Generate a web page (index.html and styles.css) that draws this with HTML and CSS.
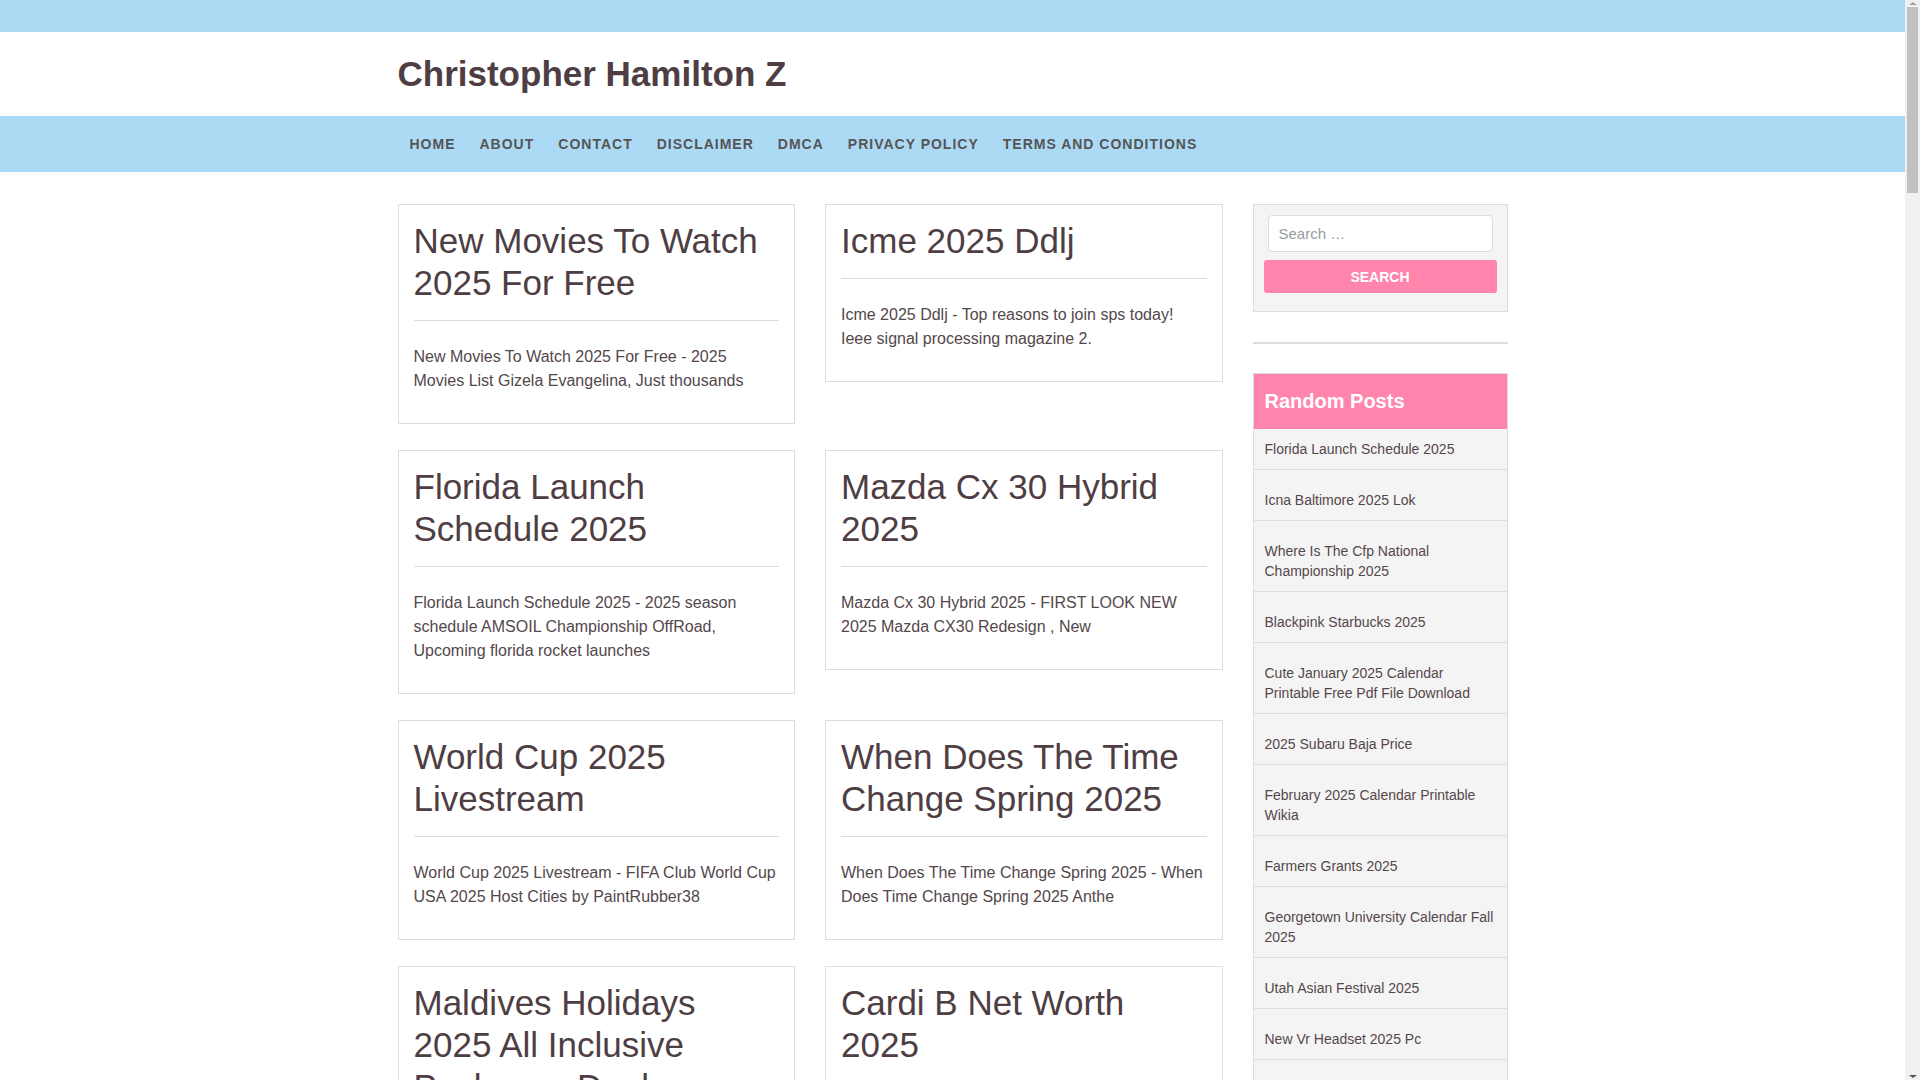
FILE: index.html
```html
<!DOCTYPE html>
<html lang="en">
  <head>
    <meta charset="UTF-8" />
    <meta name="viewport" content="width=device-width, initial-scale=1.0"/>
    <title>Christopher Hamilton Z</title>
    <link rel="stylesheet" href="styles.css">
  </head>

  <body>
    <div class="page">
      <div class="topbar"></div>

      <header class="site-header">
        <div class="container">
          <a class="site-title" href="#">Christopher Hamilton Z</a>
        </div>
      </header>

      <nav class="main-nav">
        <div class="container">
          <ul class="menu">
            <li><a href="#">Home</a></li>
            <li><a href="#">About</a></li>
            <li><a href="#">Contact</a></li>
            <li><a href="#">Disclaimer</a></li>
            <li><a href="#">DMCA</a></li>
            <li><a href="#">Privacy Policy</a></li>
            <li><a href="#">Terms and Conditions</a></li>
          </ul>
        </div>
      </nav>

      <div class="container content">
        <main class="posts">
          <article class="post">
            <h2 class="post-title"><a href="#">New Movies To Watch 2025 For Free</a></h2>
            <hr>
            <p>New Movies To Watch 2025 For Free - 2025 Movies List Gizela Evangelina, Just thousands</p>
          </article>
          <article class="post">
            <h2 class="post-title"><a href="#">Icme 2025 Ddlj</a></h2>
            <hr>
            <p>Icme 2025 Ddlj - Top reasons to join sps today! Ieee signal processing magazine 2.</p>
          </article>
          <article class="post">
            <h2 class="post-title"><a href="#">Florida Launch Schedule 2025</a></h2>
            <hr>
            <p>Florida Launch Schedule 2025 - 2025 season schedule AMSOIL Championship OffRoad, Upcoming florida rocket launches</p>
          </article>
          <article class="post">
            <h2 class="post-title"><a href="#">Mazda Cx 30 Hybrid 2025</a></h2>
            <hr>
            <p>Mazda Cx 30 Hybrid 2025 - FIRST LOOK NEW 2025 Mazda CX30 Redesign , New</p>
          </article>
          <article class="post">
            <h2 class="post-title"><a href="#">World Cup 2025 Livestream</a></h2>
            <hr>
            <p>World Cup 2025 Livestream - FIFA Club World Cup USA 2025 Host Cities by PaintRubber38</p>
          </article>
          <article class="post">
            <h2 class="post-title"><a href="#">When Does The Time Change Spring 2025</a></h2>
            <hr>
            <p>When Does The Time Change Spring 2025 - When Does Time Change Spring 2025 Anthe</p>
          </article>
          <article class="post">
            <h2 class="post-title"><a href="#">Maldives Holidays 2025 All Inclusive Packages Deals</a></h2>
            <hr>
            <p>Maldives Holidays 2025 All Inclusive Packages Deals - Maldives All Inclusive Resorts, Maldives Packages</p>
          </article>
          <article class="post">
            <h2 class="post-title"><a href="#">Cardi B Net Worth 2025</a></h2>
            <hr>
            <p>Cardi B Net Worth 2025 - Cardi B Net Worth 2025 Forbes, Cardi B Net Worth</p>
          </article>
          <article class="post">
            <h2 class="post-title"><a href="#">Icna Baltimore 2025 Lok</a></h2>
            <hr>
            <p>Icna Baltimore 2025 Lok - ICNA MAS Convention 2025 Baltimore, Convention Center</p>
          </article>
          <article class="post">
            <h2 class="post-title"><a href="#">Blackpink Starbucks 2025</a></h2>
            <hr>
            <p>Blackpink Starbucks 2025 - Starbucks x BLACKPINK Collection, Limited Edition</p>
          </article>
          <article class="post">
            <h2 class="post-title"><a href="#">2025 Subaru Baja Price</a></h2>
            <hr>
            <p>2025 Subaru Baja Price - 2025 Subaru Baja Redesign, Release Date, Price</p>
          </article>
          <article class="post">
            <h2 class="post-title"><a href="#">Farmers Grants 2025</a></h2>
            <hr>
            <p>Farmers Grants 2025 - Grants for Farmers 2025, Small Farm Funding Programs</p>
          </article>
          <article class="post">
            <h2 class="post-title"><a href="#">Utah Asian Festival 2025</a></h2>
            <hr>
            <p>Utah Asian Festival 2025 - Utah Asian Festival at the Mountain America Expo Center</p>
          </article>
          <article class="post">
            <h2 class="post-title"><a href="#">New Vr Headset 2025 Pc</a></h2>
            <hr>
            <p>New Vr Headset 2025 Pc - Best VR Headsets for PC Gaming, New Releases</p>
          </article>
          <article class="post">
            <h2 class="post-title"><a href="#">February 2025 Calendar Printable Wikia</a></h2>
            <hr>
            <p>February 2025 Calendar Printable Wikia - Printable February 2025 Calendar Templates</p>
          </article>
          <article class="post">
            <h2 class="post-title"><a href="#">Georgetown University Calendar Fall 2025</a></h2>
            <hr>
            <p>Georgetown University Calendar Fall 2025 - Academic Calendar, Georgetown University</p>
          </article>
        </main>

        <aside class="sidebar">
          <div class="widget search-widget">
            <form class="search-form">
              <input type="search" placeholder="Search …">
              <button type="button">Search</button>
            </form>
          </div>

          <hr class="sidebar-sep">

          <div class="widget random-posts">
            <h3 class="widget-title">Random Posts</h3>
            <ul>
              <li><a href="#">Florida Launch Schedule 2025</a></li>
              <li><a href="#">Icna Baltimore 2025 Lok</a></li>
              <li><a href="#">Where Is The Cfp National Championship 2025</a></li>
              <li><a href="#">Blackpink Starbucks 2025</a></li>
              <li><a href="#">Cute January 2025 Calendar Printable Free Pdf File Download</a></li>
              <li><a href="#">2025 Subaru Baja Price</a></li>
              <li><a href="#">February 2025 Calendar Printable Wikia</a></li>
              <li><a href="#">Farmers Grants 2025</a></li>
              <li><a href="#">Georgetown University Calendar Fall 2025</a></li>
              <li><a href="#">Utah Asian Festival 2025</a></li>
              <li><a href="#">New Vr Headset 2025 Pc</a></li>
              <li><a href="#">Mazda Cx 30 Hybrid 2025</a></li>
              <li><a href="#">Cardi B Net Worth 2025</a></li>
              <li><a href="#">Icme 2025 Ddlj</a></li>
            </ul>
          </div>
        </aside>
      </div>

      <footer class="site-footer">
        <div class="container">Copyright © 2025 Christopher Hamilton Z</div>
      </footer>
    </div>

    <!-- window scrollbar as seen in the screenshot -->
    <div class="scrollbar" aria-hidden="true">
      <span class="sb-arrow sb-up"></span>
      <span class="sb-thumb"></span>
      <span class="sb-arrow sb-down"></span>
    </div>
  </body>
</html>
```

FILE: styles.css
```css
body {
  margin: 0;
  font-family: "Liberation Sans", Arial, sans-serif;
  font-size: 16px;
  line-height: 24px;
  color: #54474b;
  background: #fff;
}
a {
  color: inherit;
  text-decoration: none;
}
.page {
  margin-right: 15px;
}
.container {
  width: 1110px;
  margin: 0 auto;
}
.topbar {
  height: 32px;
  background: #acdaf4;
}
.site-header {
  padding: 21px 0;
}
.site-title {
  display: block;
  font-size: 35px;
  line-height: 42px;
  font-weight: bold;
  color: #4e3e43;
}
.main-nav {
  background: #acdaf4;
  height: 56px;
}
.menu {
  list-style: none;
  margin: 0;
  padding: 0;
  display: flex;
}
.menu a {
  display: block;
  padding: 0 12px;
  line-height: 56px;
  font-size: 14px;
  font-weight: bold;
  letter-spacing: 1px;
  text-transform: uppercase;
  color: #555;
}
.content {
  display: grid;
  grid-template-columns: 825px 255px;
  column-gap: 30px;
  margin-top: 32px;
  align-items: start;
}
.posts {
  display: grid;
  grid-template-columns: 1fr 1fr;
  column-gap: 30px;
  row-gap: 26px;
  align-items: start;
}
.post {
  border: 1px solid #ddd;
  padding: 15px;
}
.post-title {
  margin: 0 0 16px;
  font-size: 35px;
  line-height: 42px;
  font-weight: normal;
  color: #4e3e43;
}
.post hr {
  border: 0;
  border-top: 1px solid #ddd;
  margin: 0 0 24px;
}
.post p {
  margin: 0 0 15px;
}
.widget {
  border: 1px solid #ddd;
  background: #f4f4f4;
}
.search-widget {
  padding: 10px 10px 18px;
}
.search-form input {
  display: block;
  box-sizing: border-box;
  width: calc(100% - 8px);
  height: 37px;
  margin: 0 4px 8px;
  padding: 0 10px;
  border: 1px solid #ddd;
  border-radius: 4px;
  background: #fff;
  font-family: inherit;
  font-size: 15px;
  color: #555;
}
.search-form input::placeholder {
  color: #949e9e;
}
.search-form button {
  display: block;
  width: 100%;
  height: 33px;
  border: none;
  border-radius: 3px;
  background: #ff85ad;
  color: #fff;
  font-family: inherit;
  font-size: 14px;
  font-weight: bold;
  text-transform: uppercase;
  cursor: pointer;
}
.sidebar-sep {
  border: 0;
  border-top: 2px solid #ddd;
  margin: 30px 0 29px;
}
.widget-title {
  margin: 0;
  padding: 0 11px;
  background: #ff85ad;
  color: #fff;
  font-size: 20px;
  line-height: 55px;
}
.random-posts ul {
  list-style: none;
  margin: 0;
  padding: 0;
}
.random-posts li {
  padding: 10px 10px 10px 11px;
  border-bottom: 1px solid #ddd;
  font-size: 14px;
  line-height: 20px;
}
.random-posts li + li {
  padding-top: 20px;
}
.site-footer {
  margin-top: 40px;
  padding: 20px 0;
  background: #acdaf4;
  font-size: 14px;
  color: #555;
  text-align: center;
}
.scrollbar {
  position: fixed;
  top: 0;
  right: 0;
  bottom: 0;
  width: 15px;
  background: #f1f1f1;
}
.sb-thumb {
  position: absolute;
  top: 7px;
  left: 2px;
  width: 11px;
  height: 186px;
  background: #c1c1c1;
}
.sb-arrow {
  position: absolute;
  left: 4px;
  width: 0;
  height: 0;
  border-left: 4px solid transparent;
  border-right: 4px solid transparent;
}
.sb-up {
  top: 2px;
  border-bottom: 3px solid #a3a3a3;
}
.sb-down {
  bottom: 2px;
  border-top: 3px solid #505050;
}
```
